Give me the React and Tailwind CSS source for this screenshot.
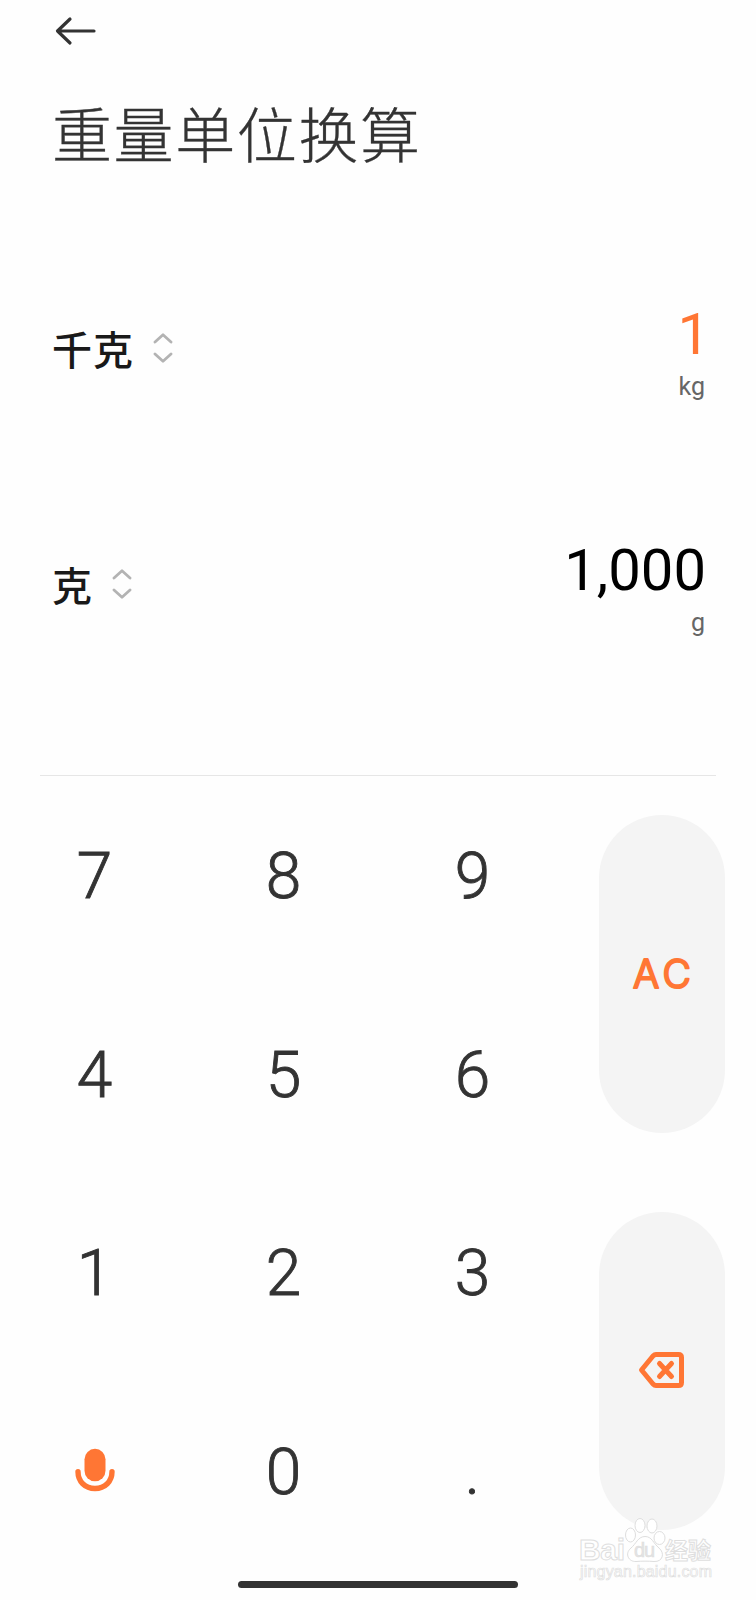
import React, { useState } from 'react';

const UnitRow = ({ name, value, unit, active }) => (
  <div className="flex items-start justify-between h-[236px] pl-[52px] pr-[51px]">
    <button className="flex items-center gap-5 h-[60px] mt-5">
      <span className="pt-[3px] text-[40px] leading-[60px] tracking-[1px] font-medium text-[#191919]">{name}</span>
      <svg className="w-5 h-[30px] -mt-1 -ml-px" viewBox="0 0 20 30" fill="none" stroke="#b3b3b3" strokeWidth="2.8" strokeLinecap="round" strokeLinejoin="round">
        <path d="M2 9L10 1.8L18 9M2 21L10 28.2L18 21" />
      </svg>
    </button>
    <div className="flex flex-col items-end pt-px">
      <span className={`text-[58px] leading-[66px] ${active ? '-mr-[5px] text-[#ff7634]' : '-mr-px text-black'}`}>{value}</span>
      <span className="text-[25px] leading-[30px] mt-[5px] text-[#666666]">{unit}</span>
    </div>
  </div>
);

const Key = ({ label, onPress }) => (
  <button onClick={() => onPress(label)} className="flex items-center justify-center pt-1 text-[64px] leading-none font-light text-[#333333] [-webkit-text-stroke:0.9px_#333333]">
    {label}
  </button>
);

const MicIcon = () => (
  <svg className="w-10 h-11 -mt-0.5" viewBox="0 0 40 44" fill="none">
    <rect x="9.5" y="0.8" width="21" height="32.5" rx="10.5" fill="#ff7634" />
    <path d="M3 23.8C3 33.5 10 40.5 20 40.5S37 33.5 37 23.8" stroke="#ff7634" strokeWidth="5.4" strokeLinecap="round" />
  </svg>
);

const BackspaceIcon = () => (
  <svg className="w-12 h-10 -mt-[3px]" viewBox="0 0 48 40" fill="none" stroke="#ff7634" strokeWidth="5" strokeLinecap="round" strokeLinejoin="round">
    <path d="M18 4.5H40.5Q43.5 4.5 43.5 7.5V32.5Q43.5 35.5 40.5 35.5H18Q16.5 35.5 15 34L3.5 20L15 6Q16.5 4.5 18 4.5Z" />
    <path d="M21.5 13.5L33.5 26.5M33.5 13.5L21.5 26.5" />
  </svg>
);

const Watermark = () => (
  <div className="absolute left-[578px] top-[1516px] pointer-events-none">
    <svg className="w-[140px] h-[70px]" viewBox="0 0 140 70" fill="#ffffff" stroke="#dedede" strokeWidth="1">
      <text x="1" y="44" fontFamily="Liberation Sans" fontWeight="700" fontSize="30" textLength="46">Bai</text>
      <ellipse cx="52.5" cy="19" rx="5" ry="7" />
      <ellipse cx="62" cy="9.5" rx="5" ry="7" />
      <ellipse cx="74" cy="10" rx="5" ry="7" />
      <ellipse cx="81.5" cy="22" rx="5.5" ry="6.5" />
      <path d="M67 20.5C60 20.5 58 28 53 32C46 38 51 46 58 45.5C64 45 70 45 76 45.5C85 46 87 37 81 32C75 27 74 20.5 67 20.5Z" />
      <text x="56" y="41" fontFamily="Liberation Sans" fontSize="20" fill="#e4e4e4" strokeWidth="0.6" textLength="21">du</text>
      <text x="87" y="43" fontFamily="Noto Sans CJK SC" fontWeight="700" fontSize="23" textLength="46">经验</text>
      <text x="2" y="61" fontFamily="Liberation Sans" fontSize="16" strokeWidth="0.7" textLength="132">jingyan.baidu.com</text>
    </svg>
  </div>
);

const App = () => {
  const [value, setValue] = useState('1');

  const press = (key) => {
    if (key === '.' && value.includes('.')) return;
    setValue(value === '0' && key !== '.' ? key : value + key);
  };

  const grams = (Number(value) * 1000).toLocaleString('en-US');

  return (
    <div className="relative flex flex-col w-[756px] h-[1600px] overflow-hidden bg-[#fefefe] font-['Roboto','Noto_Sans_CJK_SC',sans-serif]">
      {/* Header */}
      <header className="h-[300px] pl-[52px] pt-4">
        <button className="block">
          <svg className="w-11 h-[30px]" viewBox="0 0 44 30" fill="none" stroke="#333333" strokeWidth="3.2" strokeLinecap="round" strokeLinejoin="round">
            <path d="M18 3L5.5 15L18 27M5.5 15H42" />
          </svg>
        </button>
        <h1 className="mt-[50px] text-[60px] leading-[84px] tracking-[1.6px] font-light text-[#333333] [-webkit-text-stroke:0.3px_#333333]">重量单位换算</h1>
      </header>

      {/* Units */}
      <UnitRow name="千克" value={value} unit="kg" active />
      <UnitRow name="克" value={grams} unit="g" />
      <div className="mx-10 mt-[3px] h-px shrink-0 bg-[#e6e6e6]" />

      {/* Keypad */}
      <div className="grid grid-cols-4 grid-rows-4 h-[794px] shrink-0">
        {['7', '8', '9'].map((n) => <Key key={n} label={n} onPress={press} />)}
        <button onClick={() => setValue('0')} className="row-span-2 mt-[39px] mb-10 mx-auto w-[126px] rounded-[63px] bg-[#f4f4f4] flex items-center justify-center">
          <svg className="w-20 h-[60px]" viewBox="0 0 80 60">
            <text x="11" y="44" fontFamily="Inter" fontWeight="300" fontSize="39" textLength="58" fill="#ff7634" stroke="#ff7634" strokeWidth="2.2" strokeLinejoin="round">AC</text>
          </svg>
        </button>
        {['4', '5', '6', '1', '2', '3'].map((n) => <Key key={n} label={n} onPress={press} />)}
        <button onClick={() => setValue(value.slice(0, -1) || '0')} className="row-span-2 mt-[39px] mb-10 mx-auto w-[126px] rounded-[63px] bg-[#f4f4f4] flex items-center justify-center">
          <BackspaceIcon />
        </button>
        <button className="flex items-center justify-center">
          <MicIcon />
        </button>
        {['0', '.'].map((n) => <Key key={n} label={n} onPress={press} />)}
      </div>

      {/* Home indicator */}
      <div className="mx-auto mt-[11px] h-[7px] w-[280px] shrink-0 rounded-full bg-[#333333]" />

      <Watermark />
    </div>
  );
};

export default App;
